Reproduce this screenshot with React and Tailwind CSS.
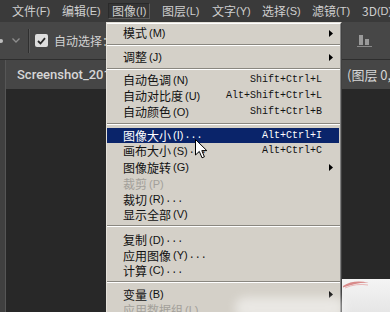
import React from "react";

const CJK = "font-['Noto_Sans_CJK_SC',sans-serif]";

const H = { 15: "h-[15px]", 16: "h-[16px]", 17: "h-[17px]" };
const PB = { 2: "pb-[2px]", 3: "pb-[3px]", 4: "pb-[4px]", 5: "pb-[5px]" };

const items = [
  { t: "模式", k: "(M)", arrow: true, h: 16 },
  { sep: 3 },
  { t: "调整", k: "(J)", arrow: true, h: 16 },
  { sep: 2 },
  { t: "自动色调", k: "(N)", sc: "Shift+Ctrl+L", h: 16 },
  { t: "自动对比度", k: "(U)", sc: "Alt+Shift+Ctrl+L", h: 16 },
  { t: "自动颜色", k: "(O)", sc: "Shift+Ctrl+B", h: 16 },
  { sep: 3 },
  { t: "图像大小", k: "(I)", dots: true, sc: "Alt+Ctrl+I", h: 15, active: true },
  { t: "画布大小", k: "(S)", dots: true, sc: "Alt+Ctrl+C", h: 16 },
  { t: "图像旋转", k: "(G)", arrow: true, h: 17 },
  { t: "裁剪", k: "(P)", disabled: true, h: 16 },
  { t: "裁切", k: "(R)", dots: true, h: 15 },
  { t: "显示全部", k: "(V)", h: 15 },
  { sep: 5 },
  { t: "复制", k: "(D)", dots: true, h: 16 },
  { t: "应用图像", k: "(Y)", dots: true, h: 15 },
  { t: "计算", k: "(C)", dots: true, h: 15 },
  { sep: 4 },
  { t: "变量", k: "(B)", arrow: true, h: 15 },
  { t: "应用数据组", k: "(L)", disabled: true, h: 16 },
];

function MenuRow({ it }) {
  const color = it.active
    ? "bg-[#0a246a] text-white"
    : it.disabled
    ? "text-[#a3a09a]"
    : "text-[#111111]";
  return (
    <div className={`${H[it.h]} ${color} mr-[1px] flex items-center pl-[16px] pr-[6px] leading-none`}>
      <span className={`${CJK} text-[12px]`}>{it.t}</span>
      <span className="font-['Liberation_Sans',sans-serif] text-[11px] ml-[2px]">{it.k}</span>
      {it.dots && (
        <span className="font-['Liberation_Mono',monospace] text-[10px] ml-[1px]">...</span>
      )}
      <div className="flex-1" />
      {it.sc && (
        <span className="font-['Liberation_Mono',monospace] text-[10px]">{it.sc}</span>
      )}
      <div className="w-[11px] flex justify-end">
        {it.arrow && (
          <svg width="4" height="7" viewBox="0 0 4 7">
            <path d="M0 0 L4 3.5 L0 7 Z" fill={it.active ? "#fff" : "#000"} />
          </svg>
        )}
      </div>
    </div>
  );
}

function Sep({ pb }) {
  return (
    <div className={`pt-[3px] ${PB[pb]}`}>
      <div className="h-[1px] bg-[#8a8780]" />
      <div className="h-[1px] bg-white" />
    </div>
  );
}

const menuBar = [
  ["文件", "(F)"],
  ["编辑", "(E)"],
  ["图像", "(I)"],
  ["图层", "(L)"],
  ["文字", "(Y)"],
  ["选择", "(S)"],
  ["滤镜", "(T)"],
  ["3D", "(D)"],
];

export default function App() {
  return (
    <div className="relative w-[390px] h-[312px] overflow-hidden bg-[#282828] flex flex-col select-none">
      {/* Menu bar */}
      <div className="h-[22px] shrink-0 bg-[#3a3a3a] flex items-center pl-[8px]">
        {menuBar.map(([a, b], i) => (
          <div key={i} className="w-[50px] shrink-0 flex">
            <div
              className={`h-[16px] px-[3px] flex items-center border ${
                i === 2 ? "border-t-[#2a2a2a] border-l-[#2a2a2a] border-b-[#5c5c5c] border-r-[#5c5c5c] bg-[#353535]" : "border-transparent"
              } text-[#cfcfcf] leading-none whitespace-nowrap`}
            >
              <span className={`${CJK} text-[12px]`}>{a}</span>
              <span className="font-['Liberation_Sans',sans-serif] text-[11px]">{b}</span>
            </div>
          </div>
        ))}
      </div>

      {/* Options bar */}
      <div className="h-[38px] shrink-0 bg-[#474747] border-b border-[#2e2e2e] flex items-center">
        <div className="w-[4px] h-[4px] rounded-full bg-[#bdbdbd] ml-[-1px]" />
        <svg className="ml-[9px]" width="8" height="5" viewBox="0 0 8 5">
          <path d="M0.5 0.5 L4 4 L7.5 0.5" stroke="#8e8e8e" strokeWidth="1.3" fill="none" />
        </svg>
        <div className="ml-[8px] w-[1px] h-[24px] bg-[#2f2f2f] border-r border-[#575757] box-content" />
        <div className="ml-[5px] w-[13px] h-[13px] bg-[#dedede] rounded-[2px] flex items-center justify-center">
          <svg width="9" height="8" viewBox="0 0 9 8">
            <path d="M1 4 L3.5 6.5 L8 1.2" stroke="#2a2a2a" strokeWidth="1.8" fill="none" />
          </svg>
        </div>
        <span className={`${CJK} ml-[6px] text-[12px] text-[#d2d2d2] leading-none`}>自动选择：</span>
        <div className="flex-1" />
        <svg className="mr-[18px] mt-[1px]" width="15" height="14" viewBox="0 0 15 14">
          <rect x="2" y="1" width="4" height="10" fill="#9a9a9a" />
          <rect x="8" y="5" width="4" height="6" fill="#9a9a9a" />
          <rect x="0" y="12" width="15" height="1" fill="#8a8a8a" />
        </svg>
      </div>

      {/* Lower area */}
      <div className="flex-1 flex min-h-0">
        <div className="w-[6px] shrink-0 bg-[#404040] border-r border-[#565656]" />
        <div className="flex-1 flex flex-col min-w-0">
          <div className="h-[29px] shrink-0 bg-[#464646] flex items-center pl-[11px] text-[#d6d6d6] whitespace-nowrap overflow-hidden">
            <span className="w-[330px] shrink-0 overflow-hidden font-['Roboto',sans-serif] font-medium text-[13px]">
              Screenshot_2018-05-21-10-22-14.png @ 66.7%
            </span>
            <span className={`${CJK} text-[13px]`}>(图层 0, RGB/8#)</span>
          </div>
          <div className="flex-1 bg-[#282828] pt-[190px] pl-[150px] min-h-0">
            <div className="h-full bg-gradient-to-b from-[#f4f4f4] to-[#e6e6e6]" />
          </div>
        </div>
      </div>

      {/* Pink stroke on image */}
      <svg className="absolute left-[342px] top-[279px]" width="48" height="16" viewBox="0 0 48 16">
        <path d="M1 7 Q12 0 27 4 Q18 2.5 1 8.5 Z" fill="#d88a8a" />
        <path d="M3 9 Q14 4 26 6" stroke="#e9b7b7" strokeWidth="1" fill="none" />
      </svg>

      {/* Dropdown menu */}
      <div className="absolute left-[106px] top-[22px] w-[236px] border-l border-t border-[#e4e1da] border-r border-r-[#404040] bg-[#d4d0c8]">
        <div className="border-t border-t-white border-r border-r-[#808080] pt-[1px] pb-[20px]">
          {items.map((it, i) =>
            it.sep ? <Sep key={i} pb={it.sep} /> : <MenuRow key={i} it={it} />
          )}
        </div>
      </div>

      {/* Faint watermark haze over bottom of menu */}
      <div className="absolute left-[235px] top-[297px] w-[110px] h-[22px] rounded-full bg-white opacity-50 blur-[5px]" />

      {/* Mouse cursor */}
      <svg className="absolute left-[195px] top-[139px]" width="13" height="21" viewBox="0 0 13 21">
        <path
          d="M0.5 0.5 L0.5 16 L4.3 12.4 L7 18.8 L9.4 17.8 L6.8 11.6 L11.8 11.6 Z"
          fill="#ffffff"
          stroke="#000000"
          strokeWidth="1"
          strokeLinejoin="miter"
        />
      </svg>
    </div>
  );
}
